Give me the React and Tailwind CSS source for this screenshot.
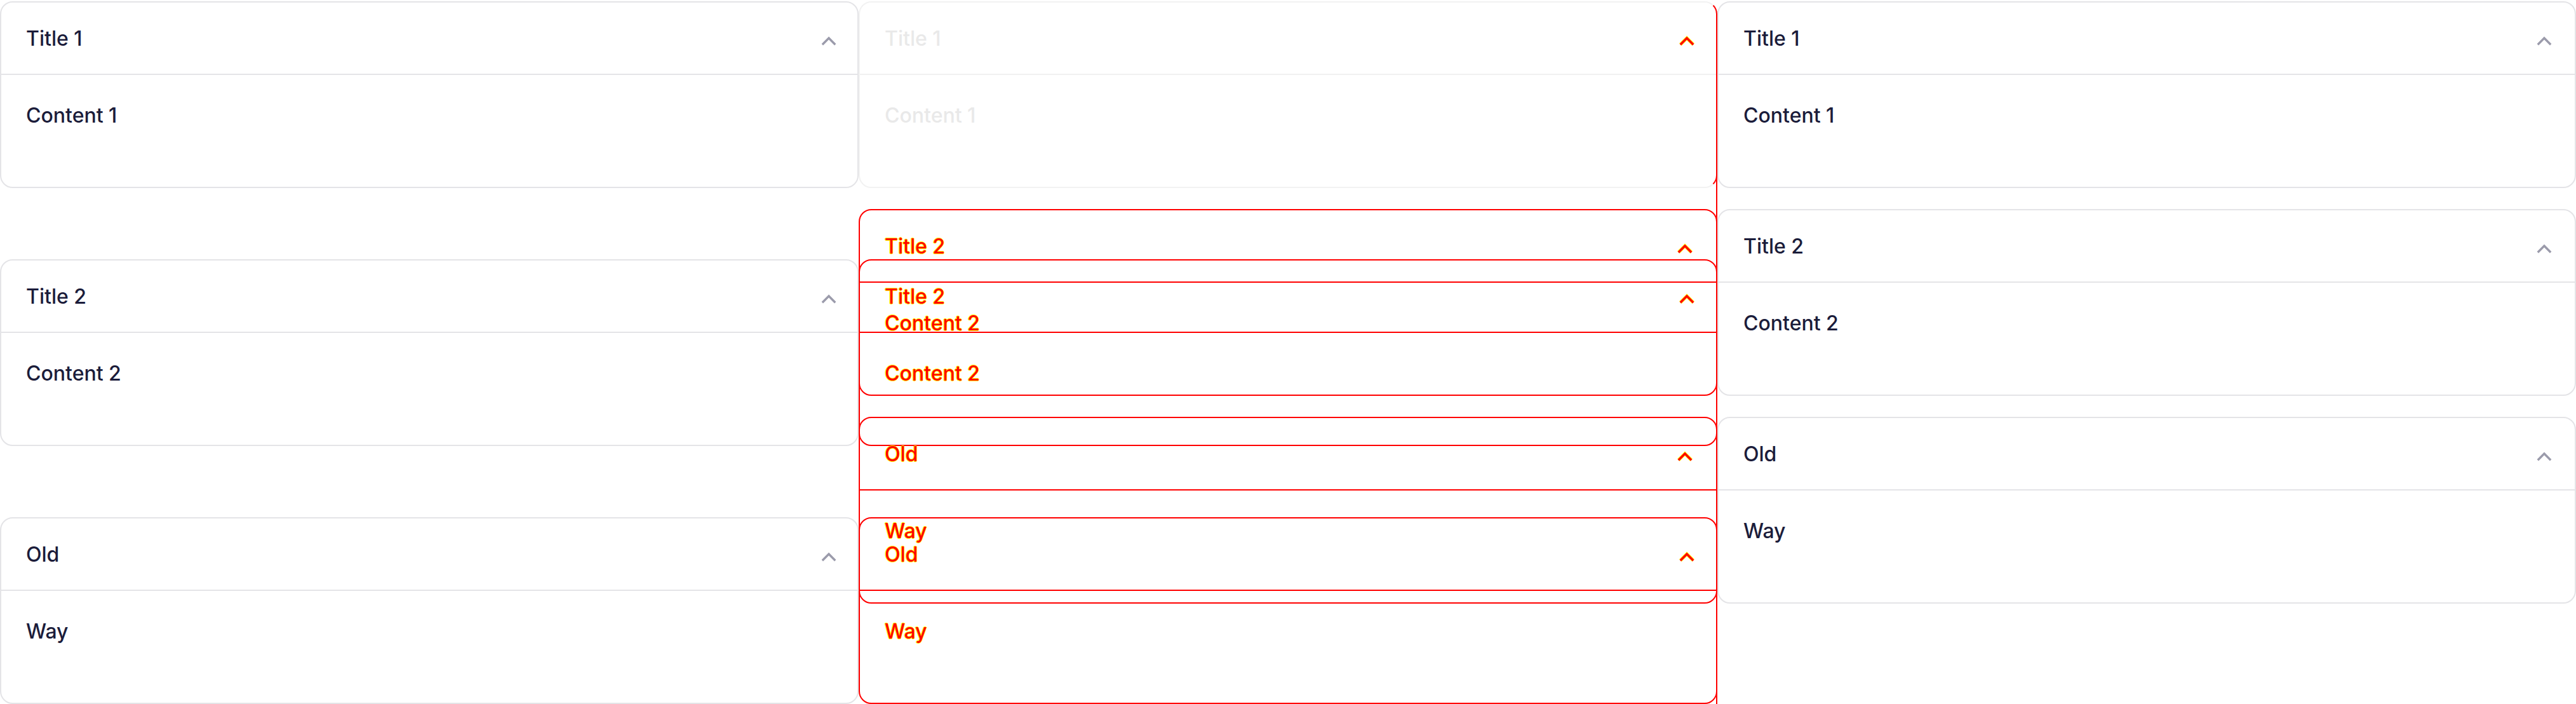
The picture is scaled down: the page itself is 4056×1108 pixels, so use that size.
import React from "react";

const FRINGE =
  "text-[#ff0000] [text-shadow:1px_0_0_#ffff00,-1px_0_0_#ffff00,0_1px_0_#ffff00,0_-1px_0_#ffff00]";

const STY = {
  normal: {
    card: "border-[#e4e4e7] bg-white",
    div: "border-[#e4e4e7]",
    text: "text-[#1b1c3a]",
  },
  faded: {
    card: "border-[#f2f2f2] bg-white",
    div: "border-[#f1f1f1]",
    text: "text-[#e9e9e9]",
  },
  red: {
    card: "border-[#ff0000]",
    div: "border-[#ff0000]",
    text: FRINGE,
  },
  ghost: {
    card: "border-transparent",
    div: "border-transparent",
    text: "text-transparent",
  },
  edge: {
    card: "border-y-transparent border-l-transparent border-r-[#ff0000]",
    div: "border-transparent",
    text: "text-transparent",
  },
};

function Chevron({ kind }) {
  const pts = "1.8,13.2 12,3 22.2,13.2";
  if (kind === "none" || kind === "ghost" || kind === "faded") {
    return <span className="w-[24px] h-[15px] mt-[9px] shrink-0" />;
  }
  if (kind === "red" || kind === "edge") {
    return (
      <svg width="26" height="17" viewBox="-1 -1 26 17" fill="none" className="mt-[9px] shrink-0">
        <polyline points={pts} stroke="#ffff00" strokeWidth="5.2" />
        <polyline points={pts} stroke="#ff0000" strokeWidth="3.4" />
      </svg>
    );
  }
  return (
    <svg width="24" height="15" viewBox="0 0 24 15" fill="none" className="mt-[9px] shrink-0">
      <polyline points={pts} stroke="#9b9bab" strokeWidth="3.4" />
    </svg>
  );
}

function Card({ title, content, v, pr }) {
  const s = STY[v];
  return (
    <div className={`h-[294px] w-full shrink-0 rounded-[20px] border-2 flex flex-col ${s.card}`}>
      <div
        className={`h-[114px] shrink-0 border-b-2 flex items-center justify-between pl-[39px] ${pr} ${s.div}`}
      >
        <span className={`text-[32px] font-medium leading-[39px] ${s.text}`}>{title}</span>
        <Chevron kind={v} />
      </div>
      <div className={`pt-[44px] pl-[39px] text-[32px] font-medium leading-[39px] ${s.text}`}>
        {content}
      </div>
    </div>
  );
}

const ITEMS = [
  ["Title 1", "Content 1"],
  ["Title 2", "Content 2"],
  ["Old", "Way"],
];

function Panel({ wide }) {
  const pr = wide ? "pr-[33px]" : "pr-[36px]";
  return (
    <div
      className={`flex flex-col w-[1352px] h-[1108px] shrink-0 pt-[2px] bg-white ${
        wide ? "gap-[112px]" : "gap-[33px]"
      }`}
    >
      {ITEMS.map(([t, c]) => (
        <Card key={t} title={t} content={c} v="normal" pr={pr} />
      ))}
    </div>
  );
}

function DiffPanel() {
  return (
    <div className="relative w-[1352px] h-[1108px] shrink-0 bg-white overflow-hidden">
      <div className="absolute inset-0 flex flex-col pt-[2px]">
        <Card title="Title 1" content="Content 1" v="faded" pr="pr-[33px]" />
      </div>
      <div className="absolute inset-0 flex flex-col pt-[2px] gap-[112px]">
        <Card title="Title 1" content="Content 1" v="ghost" pr="pr-[33px]" />
        <Card title="Title 2" content="Content 2" v="red" pr="pr-[33px]" />
        <Card title="Old" content="Way" v="red" pr="pr-[33px]" />
      </div>
      <div className="absolute inset-0 flex flex-col pt-[2px] gap-[33px]">
        <Card title="Title 1" content="Content 1" v="ghost" pr="pr-[36px]" />
        <Card title="Title 2" content="Content 2" v="red" pr="pr-[36px]" />
        <Card title="Old" content="Way" v="red" pr="pr-[36px]" />
      </div>
      <div className="absolute inset-0 flex flex-col pt-[2px]">
        <Card title="Title 1" content="Content 1" v="edge" pr="pr-[33px]" />
      </div>
      <div className="absolute right-0 top-[22px] bottom-0 w-[2px] bg-[#ff0000]" />
    </div>
  );
}

export default function App() {
  return (
    <div className="flex w-[4056px] h-[1108px] bg-white overflow-hidden font-['Inter','Noto_Sans',sans-serif]">
      <Panel wide />
      <DiffPanel />
      <Panel />
    </div>
  );
}
